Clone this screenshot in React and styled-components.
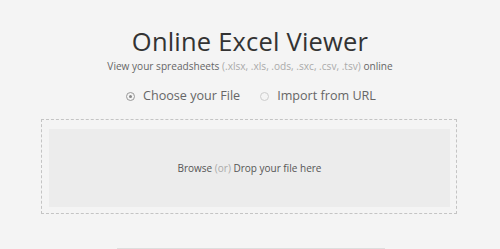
import React from "react";
import styled, { createGlobalStyle } from "styled-components";

const Global = createGlobalStyle`
  html, body { margin: 0; padding: 0; background: #f4f4f4; }
  body { font-family: "Open Sans", "Liberation Sans", sans-serif; }
`;

const Page = styled.div`
  width: 500px;
  height: 249px;
  overflow: hidden;
  display: flex;
  flex-direction: column;
  align-items: center;
  background: #f4f4f4;
`;

const Title = styled.h1`
  margin: 26px 0 0;
  font-size: 25.5px;
  font-weight: 400;
  line-height: 30px;
  color: #333;
  letter-spacing: 0.2px;
`;

const Subtitle = styled.p`
  margin: 3px 0 0;
  font-size: 10.1px;
  line-height: 14px;
  color: #666;
`;

const Muted = styled.span`
  color: #aaa;
`;

const Options = styled.div`
  display: flex;
  gap: 20px;
  margin-top: 14px;
  margin-left: 2px;
`;

const Option = styled.label`
  display: flex;
  align-items: center;
  gap: 8px;
  font-size: 12.6px;
  line-height: 18px;
  color: #666;
`;

const Radio = styled.span`
  width: 7px;
  height: 7px;
  border-radius: 50%;
  border: 1px solid ${(p) => (p.$checked ? "#999" : "#ccc")};
  display: flex;
  align-items: center;
  justify-content: center;
  &::after {
    content: "";
    width: 3px;
    height: 3px;
    border-radius: 50%;
    background: ${(p) => (p.$checked ? "#888" : "transparent")};
  }
`;

const Drop = styled.div`
  align-self: stretch;
  margin: 14px 43px 0 41px;
  border: 1px dashed #c4c4c4;
  padding: 9px 6px 6px 7px;
`;

const DropInner = styled.div`
  height: 78px;
  background: #ececec;
  display: flex;
  align-items: center;
  justify-content: center;
  font-size: 10px;
  color: #555;
`;

const Footer = styled.div`
  margin-top: auto;
  width: 268px;
  height: 1px;
  background: #ddd;
  margin-left: 2px;
`;

export default function App() {
  return (
    <>
      <Global />
      <Page>
        <Title>Online Excel Viewer</Title>
        <Subtitle>
          View your spreadsheets <Muted>(.xlsx, .xls, .ods, .sxc, .csv, .tsv)</Muted> online
        </Subtitle>
        <Options>
          <Option>
            <Radio $checked />
            Choose your File
          </Option>
          <Option>
            <Radio />
            Import from URL
          </Option>
        </Options>
        <Drop>
          <DropInner>
            <span>
              Browse <Muted>(or)</Muted> Drop your file here
            </span>
          </DropInner>
        </Drop>
        <Footer />
      </Page>
    </>
  );
}
